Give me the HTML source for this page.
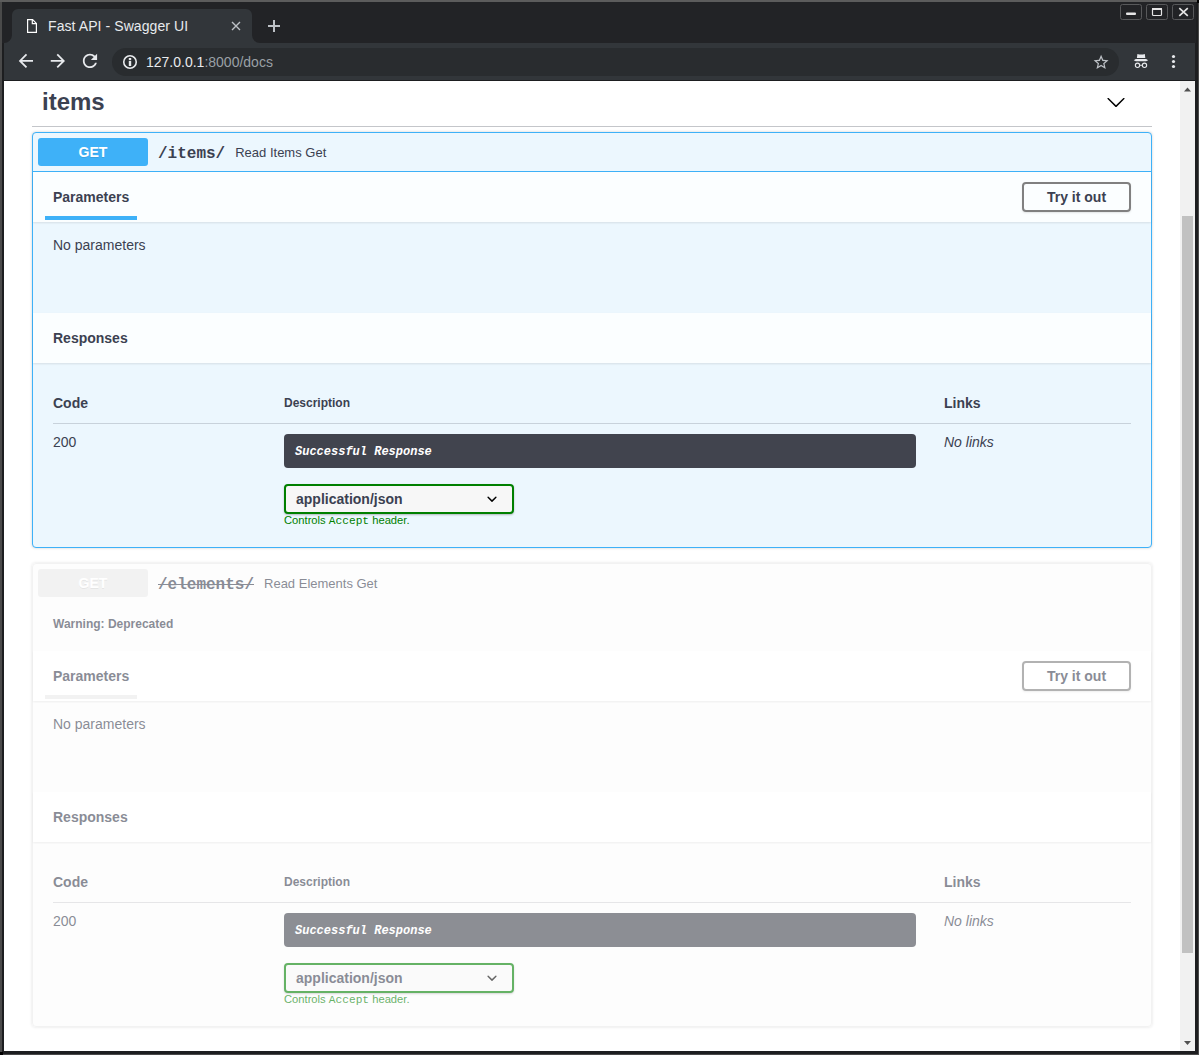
<!DOCTYPE html>
<html><head><meta charset="utf-8">
<style>
*{box-sizing:border-box}
html,body{margin:0;padding:0}
body{width:1199px;height:1055px;overflow:hidden;background:#4a4a4a;position:relative;font-family:"Liberation Sans",sans-serif}
.abs{position:absolute}
#frame{left:2px;top:2px;width:1196px;height:1052px;background:#1d1e20}
#titlebar{left:2px;top:2px;width:1194px;height:41px;background:#222326}
#tab{left:12px;top:9px;width:240px;height:34px;background:#35373a;border-radius:6px 6px 0 0}
#toolbar{left:4px;top:43px;width:1191px;height:37px;background:#35373a}
#omni{left:112px;top:48px;width:1007px;height:28px;border-radius:14px;background:#28292c}
#content{left:4px;top:81px;width:1191px;height:970px;background:#fff;overflow:hidden}
#sb{left:1176px;top:0;width:15px;height:970px;background:#f1f1f1}
#thumb{left:2px;top:135px;width:11px;height:737px;background:#c1c1c1}

.sw{position:absolute;left:28px;top:0;width:1120px;color:#3b4151}
.tag{position:absolute;left:28px;top:0;width:1120px;height:46px;border-bottom:1px solid rgba(59,65,81,.3)}
.tag .t{position:absolute;left:10px;top:7px;font-size:24px;font-weight:700;color:#3b4151;line-height:28px}
.ob{position:absolute;left:28px;width:1120px;border:1px solid #3eb1f8;border-radius:4px;background:#ecf7fe;box-shadow:0 0 3px rgba(0,0,0,.19);color:#3b4151}
.sum{display:flex;align-items:center;padding:5px;border-bottom:1px solid #3eb1f8;height:39px}
.meth{min-width:80px;width:110px;padding:6px 15px;height:28px;text-align:center;border-radius:3px;background:#3eb1f8;color:#fff;font-size:14px;font-weight:700;line-height:16px;text-shadow:0 1px 0 rgba(0,0,0,.1)}
.path{font-family:"Liberation Mono",monospace;font-weight:700;font-size:16px;padding:0 10px;color:#3b4151;position:relative;top:1.5px}
.desc{font-size:13px;color:#3b4151}
.sh{display:flex;align-items:center;padding:8px 20px;height:50px;background:rgba(255,255,255,.8);box-shadow:0 1px 2px rgba(0,0,0,.1);position:relative}
.sh h4{margin:0;font-size:14px;font-weight:700;flex:1}
.sh .ul{position:absolute;left:12px;top:44px;width:92px;height:4px;background:#3eb1f8}
.btn{position:absolute;right:20px;top:10px;width:109px;height:30px;border:2px solid gray;border-radius:4px;box-shadow:0 1px 2px rgba(0,0,0,.1);font-size:14px;font-weight:700;text-align:center;line-height:26px;color:#3b4151}
.noparams{height:91px;padding:13px 20px;font-size:14px;line-height:20px}
.resp{padding:20px}
.thead{position:relative;height:41px;border-bottom:1px solid rgba(59,65,81,.2)}
.th{position:absolute;top:12px;font-weight:700}
.row{position:relative;height:124px}
.dbox{position:absolute;left:231px;top:10px;width:632px;height:34px;border-radius:4px;background:#41444e;color:#fff;font-family:"Liberation Mono",monospace;font-weight:700;font-style:italic;font-size:12px;padding:11px 11px;line-height:14px}
.sel{position:absolute;left:231px;top:60px;width:230px;height:30px;border:2px solid green;border-radius:4px;background:#f7f7f7;box-shadow:0 1px 2px 0 rgba(0,0,0,.25);font-size:14px;font-weight:700;padding:0 10px;line-height:26px;color:#3b4151}
.small{position:absolute;left:231px;top:90px;font-size:11.2px;color:green}
.small span{font-family:"Liberation Mono",monospace}
.dep{opacity:.6;background:rgba(235,235,235,.1);border-color:#ebebeb}
.dep .sum{border-bottom:0;height:38px}
.dep .meth{background:#ebebeb}
.dep .path{text-decoration:line-through}
.dep .ul{background:#ebebeb}
.dep .dbox{}
</style></head>
<body>
<div id="frame" class="abs"></div>
<div class="abs" style="left:0;top:0;width:1199px;height:2px;background:#5c5c5c"></div>
<div class="abs" style="left:1197px;top:0;width:2px;height:3px;background:#000"></div>
<div class="abs" style="left:0;top:1052px;width:3px;height:3px;background:#000"></div>
<div id="titlebar" class="abs"></div>
<svg class="abs" style="left:0;top:0" width="1199" height="81">
 <path d="M4 43 A8 8 0 0 0 12 35 L12 15 A6 6 0 0 1 18 9 L246 9 A6 6 0 0 1 252 15 L252 35 A8 8 0 0 0 260 43 Z" fill="#32363a"/>
 <!-- file icon -->
 <path d="M27.6 19.6 H32.6 L36.4 23.4 V32.4 H27.6 Z" fill="none" stroke="#fff" stroke-width="1.2"/>
 <path d="M32.3 19.6 V23.7 H36.4" fill="none" stroke="#fff" stroke-width="1.2"/>
 <!-- tab close -->
 <path d="M232 22 L240 30 M240 22 L232 30" stroke="#bdc1c6" stroke-width="1.4"/>
 <!-- new tab plus -->
 <path d="M274 20 V32 M268 26 H280" stroke="#bdc1c6" stroke-width="2"/>
 <!-- window buttons -->
 <rect x="1120.5" y="4.5" width="21" height="15" rx="2" fill="none" stroke="#58595b" stroke-width="1"/>
 <rect x="1146.5" y="4.5" width="21" height="15" rx="2" fill="none" stroke="#58595b" stroke-width="1"/>
 <rect x="1172.5" y="4.5" width="21" height="15" rx="2" fill="none" stroke="#58595b" stroke-width="1"/>
 <rect x="1126" y="12.5" width="10" height="2.5" rx="1" fill="#e6e6e6"/>
 <rect x="1152.5" y="8.5" width="9" height="7" rx="1" fill="none" stroke="#e6e6e6" stroke-width="1.2"/>
 <rect x="1152" y="8" width="10" height="2" fill="#e6e6e6"/>
 <path d="M1179.3 8.2 L1187.8 15.8 M1187.8 8.2 L1179.3 15.8" stroke="#e6e6e6" stroke-width="1.7"/>
 <!-- toolbar -->
 <rect x="4" y="43" width="1191" height="37" fill="#32363a"/>
 <rect x="4" y="80" width="1191" height="1" fill="#1d1e20"/>
 <rect x="112" y="48" width="1007" height="28" rx="14" fill="#292c2f"/>
 <!-- back -->
 <g transform="translate(15.2,50.2) scale(0.89)" fill="#e8eaed"><path d="M20 11H7.83l5.59-5.59L12 4l-8 8 8 8 1.41-1.41L7.83 13H20v-2z"/></g>
 <!-- forward -->
 <g transform="translate(47.2,50.2) scale(0.89)" fill="#e8eaed"><path d="M12 4l-1.41 1.41L16.17 11H4v2h12.17l-5.58 5.59L12 20l8-8z"/></g>
 <!-- reload -->
 <g transform="translate(79.3,50.2) scale(0.89)" fill="#e8eaed"><path d="M17.65 6.35C16.2 4.9 14.21 4 12 4c-4.42 0-7.99 3.58-7.99 8s3.57 8 7.99 8c3.73 0 6.84-2.55 7.73-6h-2.08c-.82 2.33-3.04 4-5.65 4-3.31 0-6-2.69-6-6s2.69-6 6-6c1.66 0 3.14.69 4.22 1.78L13 11h7V4l-2.35 2.35z"/></g>
 <!-- info -->
 <circle cx="130" cy="62" r="6.25" fill="none" stroke="#e8eaed" stroke-width="1.6"/>
 <rect x="128.8" y="61" width="2.4" height="5" fill="#e8eaed"/>
 <rect x="128.8" y="58" width="2.4" height="2.2" fill="#e8eaed"/>
 <!-- star -->
 <g transform="translate(1093.6,53.3) scale(0.75)" fill="#bdc1c6"><path d="M22 9.24l-7.19-.62L12 2 9.19 8.63 2 9.24l5.46 4.73L5.82 21 12 17.27 18.18 21l-1.63-7.03L22 9.24zM12 15.4l-3.76 2.27 1-4.28-3.32-2.88 4.38-.38L12 6.1l1.71 4.04 4.38.38-3.32 2.88 1 4.28L12 15.4z" transform="translate(-2,0)"/></g>
 <!-- incognito -->
 <g fill="#e8eaed">
  <path d="M1137.4 54 Q1141.1 55.2 1144.8 54 L1145.3 58 L1136.9 58 Z"/>
  <path d="M1133.7 60.2 L1135.8 58.9 L1146.1 58.9 L1148.2 60.2 L1146.1 61.2 L1135.8 61.2 Z"/>
  <rect x="1139.6" y="64.8" width="2.8" height="0.9"/>
 </g>
 <circle cx="1137.5" cy="65.3" r="2.15" fill="none" stroke="#e8eaed" stroke-width="1.1"/>
 <circle cx="1144.5" cy="65.3" r="2.15" fill="none" stroke="#e8eaed" stroke-width="1.1"/>
 <!-- menu dots -->
 <circle cx="1173.5" cy="56.5" r="1.6" fill="#e8eaed"/>
 <circle cx="1173.5" cy="61.5" r="1.6" fill="#e8eaed"/>
 <circle cx="1173.5" cy="66.5" r="1.6" fill="#e8eaed"/>
</svg>
<div class="abs" style="left:48px;top:18px;font-size:14px;letter-spacing:0.08px;color:#e8eaed;line-height:16px;white-space:nowrap">Fast API - Swagger UI</div>
<div class="abs" style="left:146px;top:54px;font-size:14px;color:#9aa0a6;line-height:17px;white-space:nowrap"><span style="color:#e8eaed">127.0.0.1</span>:8000/docs</div>
<div id="content" class="abs">
  
<div class="tag"><div class="t">items</div><svg style="position:absolute;left:1074px;top:10.8px" width="20" height="20" viewBox="0 0 20 20"><path d="M17.418 6.109c.272-.268.709-.268.979 0s.271.701 0 .969l-7.908 7.83c-.27.268-.707.268-.979 0l-7.908-7.83c-.27-.268-.27-.701 0-.969.271-.268.709-.268.979 0L10 13.25l7.418-7.141z"/></svg></div>

<div class="ob" style="top:51px;height:416px">
 <div class="sum"><div class="meth">GET</div><div class="path">/items/</div><div class="desc">Read Items Get</div></div>
 
 <div class="sh"><h4>Parameters</h4><div class="ul"></div><div class="btn">Try it out</div></div>
 <div class="noparams">No parameters</div>
 <div class="sh"><h4>Responses</h4></div>
 <div class="resp">
  <div class="thead"><div class="th" style="left:0;font-size:14px">Code</div><div class="th" style="left:231px;font-size:12px;top:13px">Description</div><div class="th" style="left:891px;font-size:14px">Links</div></div>
  <div class="row">
   <div style="position:absolute;left:0;top:10px;font-size:14px">200</div>
   <div class="dbox">Successful Response</div>
   <div class="sel">application/json<svg style="position:absolute;left:196px;top:3px" width="20" height="20" viewBox="0 0 20 20"><path d="M13.418 7.859a.695.695 0 0 1 .978 0 .68.68 0 0 1 0 .969l-3.908 3.83a.697.697 0 0 1-.979 0l-3.908-3.83a.68.68 0 0 1 0-.969.695.695 0 0 1 .978 0L10 11l3.418-3.141z"/></svg></div>
   <div class="small">Controls <span>Accept</span> header.</div>
   <div style="position:absolute;left:891px;top:10px;font-size:14px;font-style:italic">No links</div>
  </div>
 </div>
</div>

<div class="ob dep" style="top:482px;height:464px">
 <div class="sum"><div class="meth">GET</div><div class="path">/elements/</div><div class="desc">Read Elements Get</div></div>
 <div style="height:49px;padding:15px 20px;font-size:12px;font-weight:700;line-height:14px;padding-top:15px">Warning: Deprecated</div>
 <div class="sh"><h4>Parameters</h4><div class="ul"></div><div class="btn">Try it out</div></div>
 <div class="noparams">No parameters</div>
 <div class="sh"><h4>Responses</h4></div>
 <div class="resp">
  <div class="thead"><div class="th" style="left:0;font-size:14px">Code</div><div class="th" style="left:231px;font-size:12px;top:13px">Description</div><div class="th" style="left:891px;font-size:14px">Links</div></div>
  <div class="row">
   <div style="position:absolute;left:0;top:10px;font-size:14px">200</div>
   <div class="dbox">Successful Response</div>
   <div class="sel">application/json<svg style="position:absolute;left:196px;top:3px" width="20" height="20" viewBox="0 0 20 20"><path d="M13.418 7.859a.695.695 0 0 1 .978 0 .68.68 0 0 1 0 .969l-3.908 3.83a.697.697 0 0 1-.979 0l-3.908-3.83a.68.68 0 0 1 0-.969.695.695 0 0 1 .978 0L10 11l3.418-3.141z"/></svg></div>
   <div class="small">Controls <span>Accept</span> header.</div>
   <div style="position:absolute;left:891px;top:10px;font-size:14px;font-style:italic">No links</div>
  </div>
 </div>
</div>

  <div id="sb" class="abs"><div id="thumb" class="abs"></div><svg class="abs" style="left:0;top:0" width="15" height="970"><path d="M4 10.5 L11 10.5 L7.5 6.5 Z" fill="#505050"/><path d="M4 960 L11 960 L7.5 964 Z" fill="#505050"/></svg></div>
</div>
</body></html>
